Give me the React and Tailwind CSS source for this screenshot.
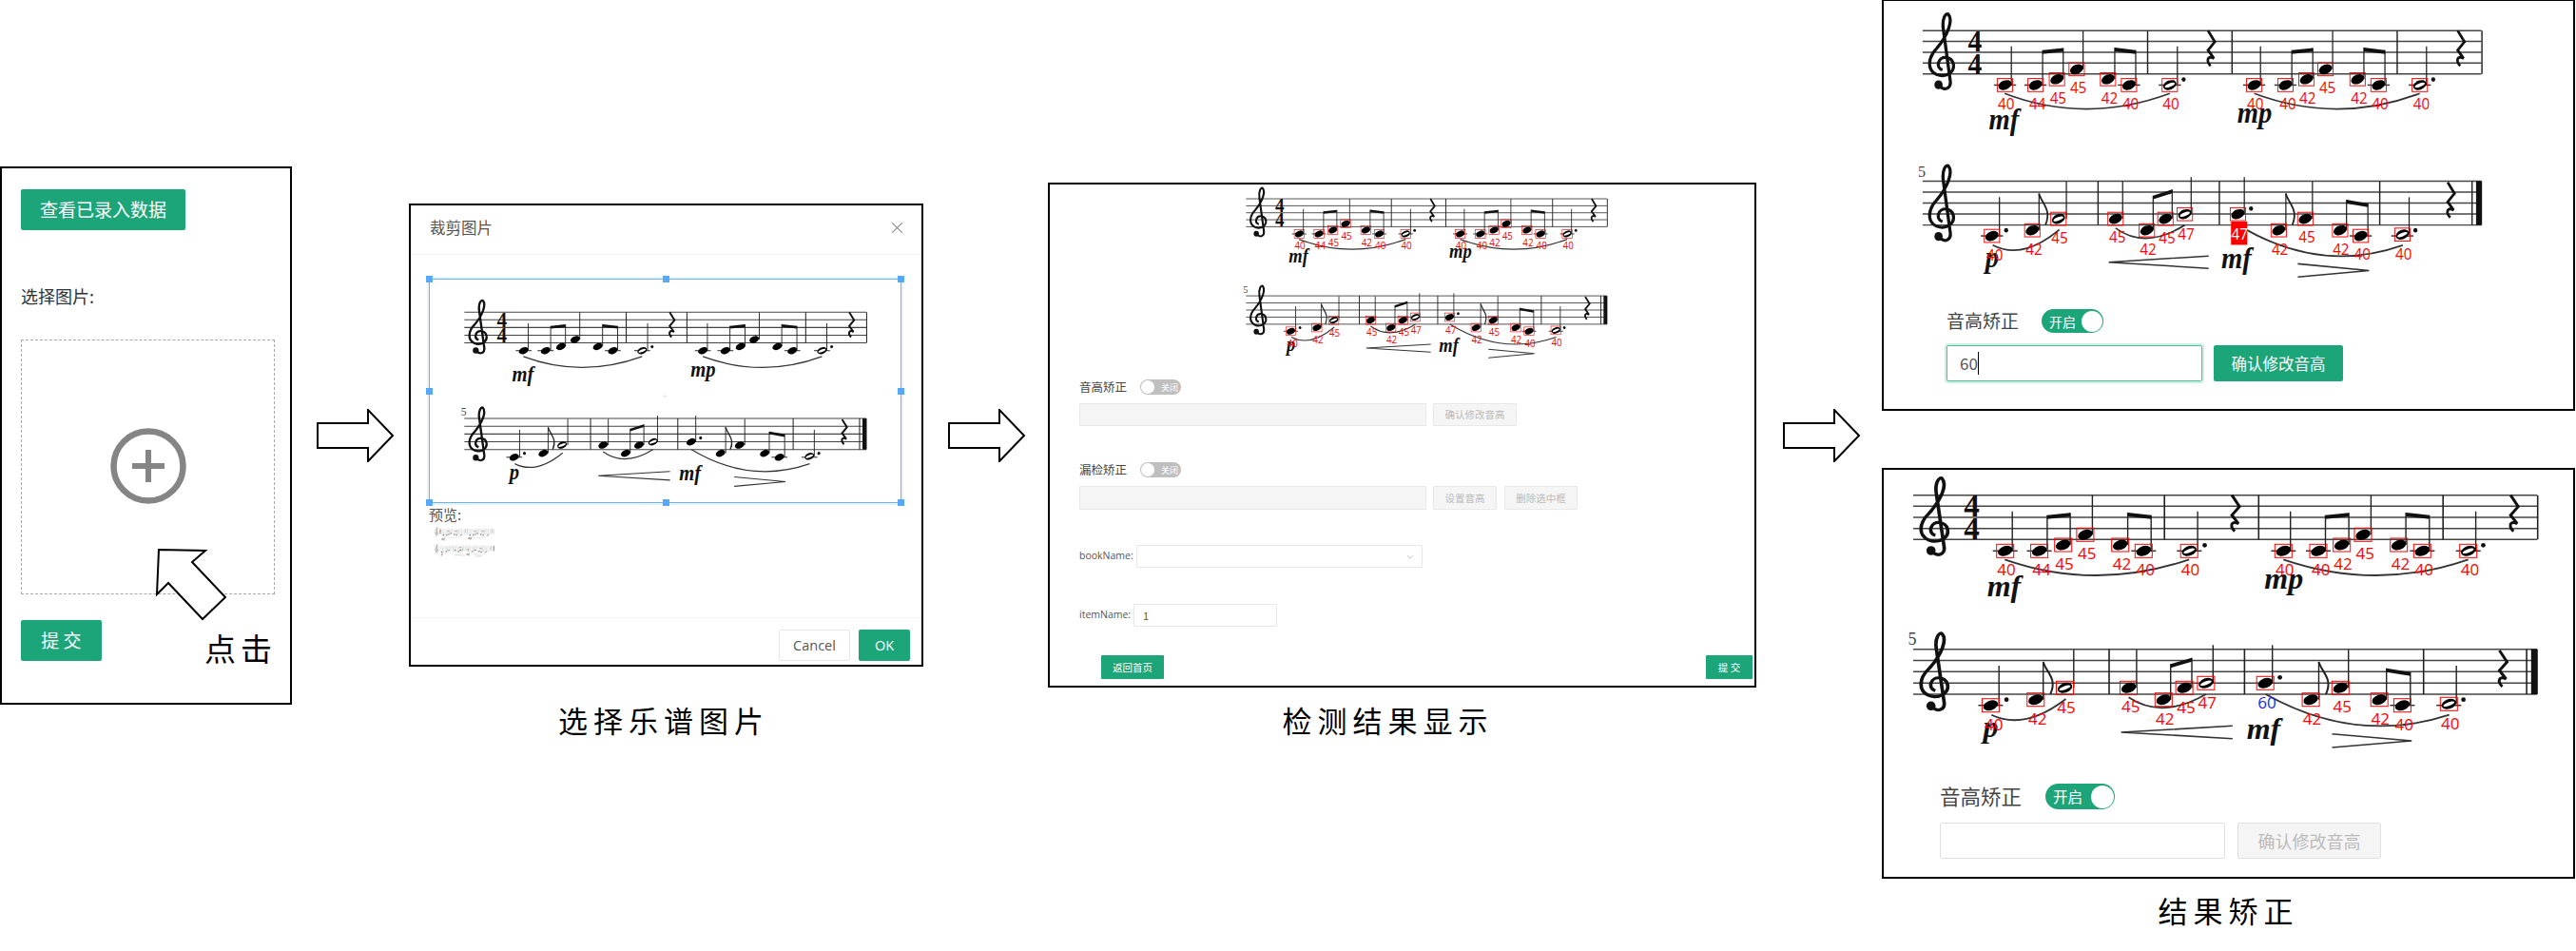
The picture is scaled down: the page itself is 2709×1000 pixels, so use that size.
import React from 'react';

// note data is measured on the lower right panel, pixels = (ref - origin) / zoom
const X = (v) => +((v - 68) / 2.15).toFixed(1);
const Y = (v) => +((v - 90) / 3).toFixed(1);

const STAFF_ROWS = [92, 578];
const STAFF_BOTTOM = [232, 720];

// x, y, label, label x, label y, half note
const NOTES = [
  [276, 268, '40', 279, 328],
  [353, 268, '44', 358, 328],
  [407, 249, '45', 410, 310],
  [457, 217, '45', 461, 277],
  [536, 249, '42', 540, 310],
  [589, 268, '40', 593, 328],
  [692, 268, '40', 695, 328, true],
  [905, 268, '40', 908, 328],
  [984, 268, '40', 990, 328],
  [1037, 249, '42', 1040, 310],
  [1085, 217, '45', 1090, 277],
  [1166, 249, '42', 1170, 310],
  [1219, 268, '40', 1223, 328],
  [1323, 268, '40', 1327, 328, true],
  [243, 755, '40', 250, 817],
  [345, 737, '42', 349, 798],
  [411, 700, '45', 414, 763, true],
  [555, 700, '45', 560, 760],
  [634, 737, '42', 637, 798],
  [681, 700, '45', 685, 762],
  [730, 685, '47', 733, 748, true],
  [864, 685, 'edit', 868, 748],
  [967, 737, '42', 970, 798],
  [1034, 700, '45', 1038, 760],
  [1122, 737, '42', 1124, 798],
  [1174, 755, '40', 1178, 815],
  [1279, 751, '40', 1282, 813, true],
];

const STEMS = [
  [292, 143, 268], [371, 155, 268], [423, 148, 249], [473, 92, 217], [553, 147, 249], [606, 155, 268], [711, 143, 268],
  [921, 143, 268], [1000, 155, 268], [1053, 148, 249], [1103, 92, 217], [1182, 147, 249], [1235, 155, 268], [1340, 143, 268],
  [262, 630, 755], [362, 618, 737], [431, 580, 700], [573, 580, 700], [650, 625, 737], [698, 605, 700], [746, 565, 685],
  [880, 565, 685], [985, 618, 737], [1052, 580, 700], [1138, 638, 737], [1192, 650, 755], [1296, 630, 751],
];

const BEAMS = [
  [371, 155, 423, 148], [553, 147, 606, 155], [1000, 155, 1053, 148], [1182, 147, 1235, 155],
  [650, 625, 698, 605], [1138, 638, 1192, 650],
];

const BARS = [
  [636, 0], [849, 0], [1266, 0], [1480, 0],
  [511, 1], [817, 1], [1222, 1], [1455, 1],
];

const DOTS = [[727, 250], [1357, 250], [279, 737], [897, 667], [1312, 737]];
const LEDGERS = [[276, 268], [353, 268], [589, 268], [692, 268], [905, 268], [984, 268], [1219, 268], [1323, 268], [243, 755], [1174, 755], [1279, 755]];
const RESTS = [[795, 155], [1425, 155], [1400, 645]];
const CLEFS = [[118, 195], [118, 685]];

const SLURS = [
  [275, 295, 480, 395, 692, 295],
  [905, 295, 1115, 395, 1323, 295],
  [245, 785, 320, 835, 413, 735],
  [555, 730, 630, 800, 730, 720],
  [865, 720, 1070, 880, 1280, 785],
];

const DYNAMICS = [
  ['mf', 235, 410], ['mp', 862, 388], ['p', 226, 855], ['mf', 822, 860],
];

function Clef({ x, y }) {
  return (
    <g transform={`translate(${X(x)} ${Y(y)}) scale(1.15 1)`} fill="none" stroke="#111">
      <path
        strokeWidth="3.2"
        d="M-3 25C2 31 9 28 8 20L1-35C-1-48 4-54 6-52C11-46 6-30-6-15C-15-5-16 8-6 13C4 17 13 10 11 1C9-7-2-8-4 0C-5 4-3 7 0 8"
      />
      <ellipse cx="-4" cy="24" rx="4.2" ry="4.8" fill="#111" stroke="none" />
    </g>
  );
}

function Score({ marks = 'none', className }) {
  return (
    <svg viewBox="-30 -20 700 300" preserveAspectRatio="none" className={className}>
      {STAFF_ROWS.map((top, row) =>
        [0, 1, 2, 3, 4].map((i) => {
          const y = Y(top) + (i * (Y(STAFF_BOTTOM[row]) - Y(top))) / 4;
          return <line key={`${row}-${i}`} x1="0" x2="656" y1={y} y2={y} stroke="#444" strokeWidth="1.5" />;
        })
      )}
      {BARS.map(([x, row]) => (
        <line key={x} x1={X(x)} x2={X(x)} y1={Y(STAFF_ROWS[row])} y2={Y(STAFF_BOTTOM[row])} stroke="#222" strokeWidth="1.6" />
      ))}
      <rect x={X(1465)} y={Y(578)} width="7" height={Y(720) - Y(578)} fill="#111" />
      {CLEFS.map(([x, y]) => <Clef key={y} x={x} y={y} />)}
      <text x={X(200)} y={Y(160)} textAnchor="middle" className="font-['Liberation_Serif',serif] font-bold text-[33px]" fill="#111">4</text>
      <text x={X(200)} y={Y(232)} textAnchor="middle" className="font-['Liberation_Serif',serif] font-bold text-[33px]" fill="#111">4</text>
      <text x={X(66)} y={Y(565)} textAnchor="middle" className="font-['Liberation_Serif',serif] text-[18px]" fill="#444">5</text>
      {LEDGERS.map(([x, y]) => (
        <line key={`${x}-${y}`} x1={X(x - 28)} x2={X(x + 28)} y1={Y(y)} y2={Y(y)} stroke="#333" strokeWidth="1.5" />
      ))}
      {STEMS.map(([x, top, bottom]) => (
        <line key={`${x}-${top}`} x1={X(x)} x2={X(x)} y1={Y(top)} y2={Y(bottom)} stroke="#222" strokeWidth="1.4" />
      ))}
      {BEAMS.map(([x1, y1, x2, y2]) => (
        <polygon key={x1} points={`${X(x1)},${Y(y1)} ${X(x2)},${Y(y2)} ${X(x2)},${Y(y2) + 4} ${X(x1)},${Y(y1) + 4}`} fill="#111" />
      ))}
      <path d={`M${X(362)} ${Y(618)}C${X(368)} ${Y(650)} ${X(395)} ${Y(670)} ${X(378)} ${Y(720)}`} fill="none" stroke="#222" strokeWidth="2" />
      <path d={`M${X(985)} ${Y(618)}C${X(991)} ${Y(650)} ${X(1018)} ${Y(670)} ${X(1001)} ${Y(720)}`} fill="none" stroke="#222" strokeWidth="2" />
      {SLURS.map(([x1, y1, cx, cy, x2, y2]) => (
        <path key={x1} d={`M${X(x1)} ${Y(y1)}Q${X(cx)} ${Y(cy)} ${X(x2)} ${Y(y2)}`} fill="none" stroke="#333" strokeWidth="1.8" />
      ))}
      <path d={`M${X(790)} ${Y(820)}L${X(538)} ${Y(840)}L${X(790)} ${Y(860)}`} fill="none" stroke="#333" strokeWidth="1.6" />
      <path d={`M${X(1015)} ${Y(845)}L${X(1195)} ${Y(867)}L${X(1015)} ${Y(888)}`} fill="none" stroke="#333" strokeWidth="1.6" />
      {DYNAMICS.map(([t, x, y]) => (
        <text key={`${t}-${x}`} x={X(x)} y={Y(y)} className="font-['Liberation_Serif',serif] font-bold italic text-[32px]" fill="#111">{t}</text>
      ))}
      {RESTS.map(([x, y]) => (
        <path key={x} transform={`translate(${X(x)} ${Y(y)})`} d="M-3-21L5-9L-3 0L4 9C-3 5-6 11 0 17" fill="none" stroke="#111" strokeWidth="3" />
      ))}
      {DOTS.map(([x, y]) => <circle key={x} cx={X(x)} cy={Y(y)} r="2.4" fill="#111" />)}
      {NOTES.map(([x, y, , , , half]) => (
        <g key={`${x}-${y}`} transform={`translate(${X(x)} ${Y(y)}) rotate(-20)`}>
          <ellipse rx="8" ry="5" fill="#000" />
          {half && <ellipse rx="6.2" ry="1.9" fill="#fff" />}
        </g>
      ))}
      {marks !== 'none' && NOTES.map(([x, y, label, lx, ly]) => {
        const edit = label === 'edit';
        const hot = edit && marks === 'highlight';
        const fixed = edit && marks === 'fixed';
        return (
          <g key={`m-${x}-${y}`}>
            <rect x={X(x) - 9} y={Y(y) - 7} width="18" height="14" fill="none" stroke="#f00" strokeWidth="1" />
            {hot && <rect x={X(lx) - 10} y={Y(ly) - 13} width="19" height="25" fill="#f00" />}
            <text
              x={X(lx)}
              y={Y(ly) + 6}
              textAnchor="middle"
              className="font-['Open_Sans',sans-serif] text-[17px]"
              fill={fixed ? '#2222ff' : hot ? '#fff' : '#f00'}
            >
              {edit ? (fixed ? '60' : '47') : label}
            </text>
          </g>
        );
      })}
    </svg>
  );
}

function Arrow({ className }) {
  return (
    <svg viewBox="0 0 82 56" className={`block shrink-0 w-[82px] h-[56px] mt-[430px] ${className}`}>
      <polygon points="1,15 54,15 54,1 80,28 54,55 54,41 1,41" fill="#fff" stroke="#000" strokeWidth="2" />
    </svg>
  );
}

function Toggle({ on, text, className, knob, label }) {
  return (
    <div className={`flex items-center rounded-full p-px ${on ? 'bg-[#1da57a] justify-between' : 'bg-[#bfbfbf]'} ${className}`}>
      {on ? (
        <>
          <span className={`text-white leading-none pl-[7px] ${label}`}>{text}</span>
          <span className={`rounded-full bg-white ${knob}`} />
        </>
      ) : (
        <>
          <span className={`rounded-full bg-white ${knob}`} />
          <span className={`text-white leading-none pl-[7px] ${label}`}>{text}</span>
        </>
      )}
    </div>
  );
}

function Caption({ children, className }) {
  return <div className={`h-[40px] leading-[40px] text-center text-[31px] tracking-[6px] text-black ${className}`}>{children}</div>;
}

const HANDLES = [
  '-left-[4px] -top-[4px]', 'left-1/2 -top-[4px] -ml-[3px]', '-right-[4px] -top-[4px]',
  '-left-[4px] top-1/2 -mt-[3px]', '-right-[4px] top-1/2 -mt-[3px]',
  '-left-[4px] -bottom-[4px]', 'left-1/2 -bottom-[4px] -ml-[3px]', '-right-[4px] -bottom-[4px]',
];

function UploadPanel() {
  return (
    <div className="relative shrink-0 w-[307px] h-[566px] mt-[175px] border-2 border-black pl-[20px] pt-[22px] text-[#333]">
      <button className="block w-[173px] h-[43px] rounded-[2px] bg-[#1da57a] text-white text-[19px]">查看已录入数据</button>
      <div className="mt-[56px] h-[26px] leading-[26px] text-[18px]">选择图片:</div>
      <div className="mt-[33px] w-[267px] h-[268px] border border-dashed border-[#a8a8a8] flex items-center justify-center">
        <svg viewBox="0 0 80 80" className="w-[80px] h-[80px] -mt-[2px]">
          <circle cx="40" cy="40" r="36.5" fill="none" stroke="#858585" strokeWidth="6.5" />
          <rect x="23" y="37" width="34" height="6" fill="#858585" />
          <rect x="37" y="23" width="6" height="34" fill="#858585" />
        </svg>
      </div>
      <div className="mt-[27px] flex items-start">
        <button className="w-[85px] h-[43px] rounded-[2px] bg-[#1da57a] text-white text-[19px]">提 交</button>
        <span className="ml-[108px] mt-[9px] h-[40px] leading-[40px] text-[33px] tracking-[5px] text-black">点击</span>
      </div>
      <svg viewBox="0 0 76 76" className="absolute left-[163px] top-[401px] w-[76px] h-[76px] overflow-visible">
        <polygon points="2,0 51,1 37,13 72,50 48,73 12,35 0,47" fill="#fff" stroke="#000" strokeWidth="2" />
      </svg>
    </div>
  );
}

function CropPanel() {
  return (
    <div className="w-[541px] h-[487px] border-2 border-black flex flex-col">
      <div className="h-[52px] shrink-0 flex items-center justify-between pl-[20px] pr-[19px] pb-[4px] border-b border-[#f2f2f2]">
        <span className="text-[16.5px] text-[#555]">裁剪图片</span>
        <svg viewBox="0 0 12 12" className="w-[13px] h-[13px]">
          <path d="M1 1L11 11M11 1L1 11" stroke="#8a8a8a" strokeWidth="1" />
        </svg>
      </div>
      <div className="flex-1 pl-[19px] pt-[25px]">
        <div className="relative w-[497px] h-[236px] border border-[#69b1f7] shadow-[0_0_0_2px_#eaf4fe]">
          <Score className="block ml-[17px] mt-[20px] w-[451px] h-[207px]" />
          {HANDLES.map((h) => <span key={h} className={`absolute w-[7px] h-[7px] bg-[#58a8fa] ${h}`} />)}
          <span className="absolute left-1/2 top-1/2 -ml-[3px] text-[10px] leading-none text-[#e8e8e8]">+</span>
        </div>
        <div className="mt-[2px] h-[20px] leading-[20px] text-[15px] text-[#555]">预览:</div>
        <Score className="block mt-[3px] ml-[3px] w-[67px] h-[33px] opacity-60" />
      </div>
      <div className="h-[50px] shrink-0 border-t border-[#f2f2f2] flex justify-end items-start gap-[9px] pt-[12px] pr-[12px]">
        <button className="w-[75px] h-[33px] border border-[#e8e8e8] rounded-[2px] text-[14.5px] text-[#555] font-['Open_Sans',sans-serif]">Cancel</button>
        <button className="w-[54px] h-[33px] rounded-[2px] bg-[#1da57a] text-white text-[14.5px] font-['Open_Sans',sans-serif]">OK</button>
      </div>
    </div>
  );
}

function DisabledButton({ className, children }) {
  return <button className={`border border-[#e8e8e8] bg-[#f5f5f5] rounded-[1px] text-[#bbb] text-[10.5px] ${className}`}>{children}</button>;
}

function ResultPanel() {
  return (
    <div className="w-[745px] h-[531px] border-2 border-black">
      <Score marks="plain" className="block ml-[189px] mt-[2px] w-[405px] h-[189px]" />
      <div className="pl-[31px]">
        <div className="mt-[14px] flex items-center h-[16px]">
          <span className="w-[64px] text-[12.5px] text-[#444]">音高矫正</span>
          <Toggle text="关闭" className="w-[43px] h-[16px]" knob="w-[14px] h-[14px]" label="text-[9px]" />
        </div>
        <div className="mt-[9px] flex gap-[7px] h-[24px]">
          <div className="w-[365px] border border-[#e8e8e8] bg-[#f5f5f5] rounded-[1px]" />
          <DisabledButton className="w-[88px]">确认修改音高</DisabledButton>
        </div>
        <div className="mt-[38px] flex items-center h-[16px]">
          <span className="w-[64px] text-[12.5px] text-[#444]">漏检矫正</span>
          <Toggle text="关闭" className="w-[43px] h-[16px]" knob="w-[14px] h-[14px]" label="text-[9px]" />
        </div>
        <div className="mt-[9px] flex gap-[7px] h-[25px]">
          <div className="w-[365px] border border-[#e8e8e8] bg-[#f5f5f5] rounded-[1px]" />
          <DisabledButton className="w-[67px]">设置音高</DisabledButton>
          <DisabledButton className="w-[77px] ml-px">删除选中框</DisabledButton>
        </div>
        <div className="mt-[37px] flex items-center h-[24px]">
          <span className="w-[60px] text-[10.5px] text-[#555] font-['Open_Sans',sans-serif]">bookName:</span>
          <div className="w-[301px] h-full border border-[#e8e8e8] rounded-[1px] flex items-center justify-end pr-[8px]">
            <svg viewBox="0 0 10 6" className="w-[8px] h-[5px]">
              <path d="M1 1L5 5L9 1" fill="none" stroke="#bbb" strokeWidth="1" />
            </svg>
          </div>
        </div>
        <div className="mt-[38px] flex items-center h-[24px]">
          <span className="w-[57px] text-[10.5px] text-[#555] font-['Open_Sans',sans-serif]">itemName:</span>
          <div className="w-[151px] h-full border border-[#e8e8e8] rounded-[1px] flex items-center pl-[9px] text-[11px] text-[#555]">1</div>
        </div>
      </div>
      <div className="mt-[30px] flex justify-between pl-[54px] pr-[2px]">
        <button className="w-[66px] h-[25px] rounded-[1px] bg-[#1da57a] text-white text-[10.5px]">返回首页</button>
        <button className="w-[49px] h-[25px] rounded-[1px] bg-[#1da57a] text-white text-[10.5px]">提 交</button>
      </div>
    </div>
  );
}

function CorrectingPanel() {
  return (
    <div className="w-[729px] h-[433px] -mt-px border-2 border-black">
      <Score marks="highlight" className="block ml-[14px] mt-[11px] w-[627px] h-[293px]" />
      <div className="pl-[66px]">
        <div className="mt-[20px] flex items-center h-[25px]">
          <span className="w-[100px] text-[19px] text-[#444]">音高矫正</span>
          <Toggle on text="开启" className="w-[65px] h-[25px]" knob="w-[22px] h-[22px]" label="text-[14px]" />
        </div>
        <div className="mt-[13px] flex gap-[12px] h-[38px]">
          <div className="w-[269px] border border-[#4fbf9a] rounded-[2px] shadow-[0_0_0_2px_#cdeee2] flex items-center pl-[13px] text-[17px] text-[#555]">
            60<span className="w-px h-[24px] bg-black" />
          </div>
          <button className="w-[136px] rounded-[2px] bg-[#1da57a] text-white text-[16.5px]">确认修改音高</button>
        </div>
      </div>
    </div>
  );
}

function CorrectedPanel() {
  return (
    <div className="w-[729px] h-[432px] mt-[60px] border-2 border-black">
      <Score marks="fixed" className="block ml-px mt-[6px] w-[700px] h-[300px]" />
      <div className="pl-[59px]">
        <div className="mt-[24px] flex items-center h-[27px]">
          <span className="w-[111px] text-[21.5px] text-[#444]">音高矫正</span>
          <Toggle on text="开启" className="w-[73px] h-[27px]" knob="w-[24px] h-[24px]" label="text-[15.5px]" />
        </div>
        <div className="mt-[14px] flex gap-[13px] h-[38px]">
          <div className="w-[300px] border border-[#e0e0e0] rounded-[2px]" />
          <button className="w-[151px] border border-[#e0e0e0] bg-[#f5f5f5] rounded-[2px] text-[#bbb] text-[18px]">确认修改音高</button>
        </div>
      </div>
    </div>
  );
}

export default function App() {
  return (
    <div className="w-[2709px] h-[1000px] bg-white overflow-hidden flex items-start font-['Noto_Sans_CJK_SC',sans-serif]">
      <UploadPanel />
      <Arrow className="ml-[26px]" />
      <div className="shrink-0 ml-[15px] mt-[214px]">
        <CropPanel />
        <Caption className="mt-[36px] pr-[5px]">选择乐谱图片</Caption>
      </div>
      <Arrow className="ml-[26px]" />
      <div className="shrink-0 ml-[23px] mt-[192px]">
        <ResultPanel />
        <Caption className="mt-[14px] pr-[30px]">检测结果显示</Caption>
      </div>
      <Arrow className="ml-[28px]" />
      <div className="shrink-0 ml-[22px]">
        <CorrectingPanel />
        <CorrectedPanel />
        <Caption className="mt-[13px]">结果矫正</Caption>
      </div>
    </div>
  );
}
